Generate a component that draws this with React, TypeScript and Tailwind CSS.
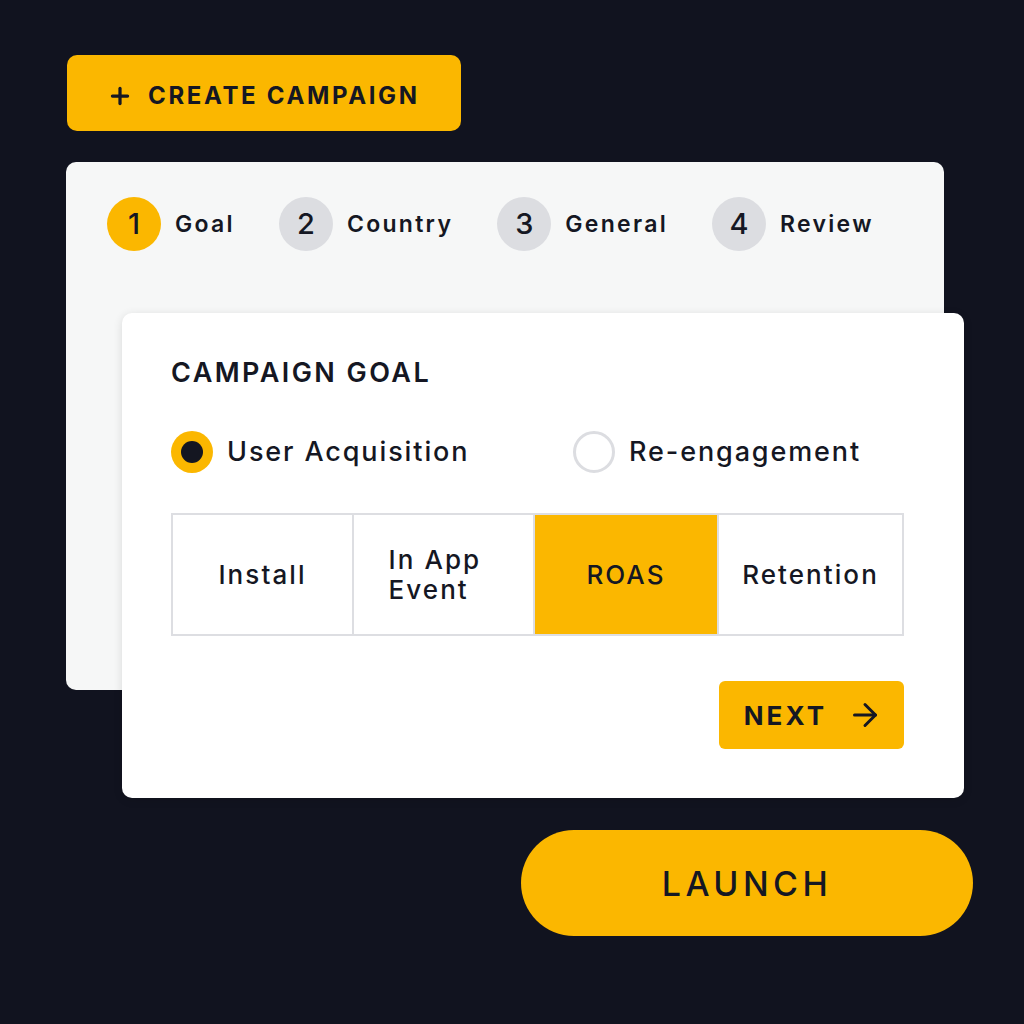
import { ArrowRight, Plus } from 'lucide-react';

const STEPS = [
  { n: 1, label: 'Goal', active: true },
  { n: 2, label: 'Country', active: false },
  { n: 3, label: 'General', active: false },
  { n: 4, label: 'Review', active: false },
];

const GOALS = ['Install', 'In App Event', 'ROAS', 'Retention'];

function Step({ n, label, active }: { n: number; label: string; active: boolean }) {
  return (
    <div className="flex items-center gap-[14px]">
      <span
        className={`flex h-[54px] w-[54px] items-center justify-center rounded-full text-[29px] font-medium ${
          active ? 'bg-[#fbb700]' : 'bg-[#dcdde1]'
        }`}
      >
        {n}
      </span>
      <span className="text-[23px] font-semibold tracking-[0.1em]">{label}</span>
    </div>
  );
}

function Radio({ label, checked }: { label: string; checked: boolean }) {
  return (
    <div className="flex items-center gap-[14px]">
      {checked ? (
        <span className="flex h-[42px] w-[42px] items-center justify-center rounded-full bg-[#fbb700]">
          <span className="h-[22px] w-[22px] rounded-full bg-[#141621]" />
        </span>
      ) : (
        <span className="h-[42px] w-[42px] rounded-full border-[3px] border-[#dcdde1] bg-white" />
      )}
      <span className="text-[27px] font-medium tracking-[0.07em]">{label}</span>
    </div>
  );
}

export default function App() {
  return (
    <div
      className="h-[1024px] w-[1024px] bg-[#11131f] pl-[66px] pt-[55px] text-[#151723]"
      style={{ fontFamily: 'Inter, "Noto Sans", sans-serif' }}
    >
      <button className="ml-px flex h-[76px] w-[394px] items-center gap-[15px] rounded-[10px] bg-[#fbb700] pl-[40px] pt-[5px] text-[24px] font-bold tracking-[0.11em]">
        <Plus size={26} strokeWidth={3} />
        CREATE CAMPAIGN
      </button>

      <div className="mt-[31px] flex w-[878px] flex-col rounded-[10px] bg-[#f6f7f7] pt-[35px]">
        <div className="flex items-center gap-[44px] pl-[41px]">
          {STEPS.map((s) => (
            <Step key={s.n} {...s} />
          ))}
        </div>

        {/* goal card overlaps the panel below and to the right */}
        <div className="relative mb-[-108px] ml-[56px] mr-[-20px] mt-[62px] rounded-[10px] bg-white pb-[49px] pl-[49px] pr-[60px] pt-[44px] shadow-[0_2px_10px_rgba(0,0,0,0.12)]">
          <h2 className="text-[27px] font-semibold leading-[32px] tracking-[0.09em]">CAMPAIGN GOAL</h2>

          <div className="mt-[42px] flex items-center">
            <div className="w-[402px]">
              <Radio label="User Acquisition" checked />
            </div>
            <Radio label="Re-engagement" checked={false} />
          </div>

          <div className="mt-[40px] grid h-[123px] grid-cols-[179px_181px_184px_1fr] border-2 border-[#dddee2] text-[26px] font-medium tracking-[0.08em]">
            {GOALS.map((g, i) => (
              <div
                key={g}
                className={`flex items-center justify-center px-[8px] leading-[30px] ${
                  i > 0 ? 'border-l-2 border-[#dddee2]' : ''
                } ${g === 'ROAS' ? 'bg-[#fbb700]' : ''}`}
              >
                <span className={g.includes(' ') ? 'max-w-[110px]' : ''}>{g}</span>
              </div>
            ))}
          </div>

          <div className="mt-[45px] flex justify-end">
            <button className="flex h-[68px] w-[185px] items-center justify-center gap-[20px] rounded-[6px] bg-[#fbb700] pl-[4px] text-[26px] font-bold tracking-[0.12em]">
              NEXT
              <ArrowRight size={36} strokeWidth={2} />
            </button>
          </div>
        </div>
      </div>

      <button className="ml-[455px] mt-[140px] flex h-[106px] w-[452px] items-center justify-center rounded-full bg-[#fbb700] text-[34px] font-medium tracking-[0.13em]">
        LAUNCH
      </button>
    </div>
  );
}
